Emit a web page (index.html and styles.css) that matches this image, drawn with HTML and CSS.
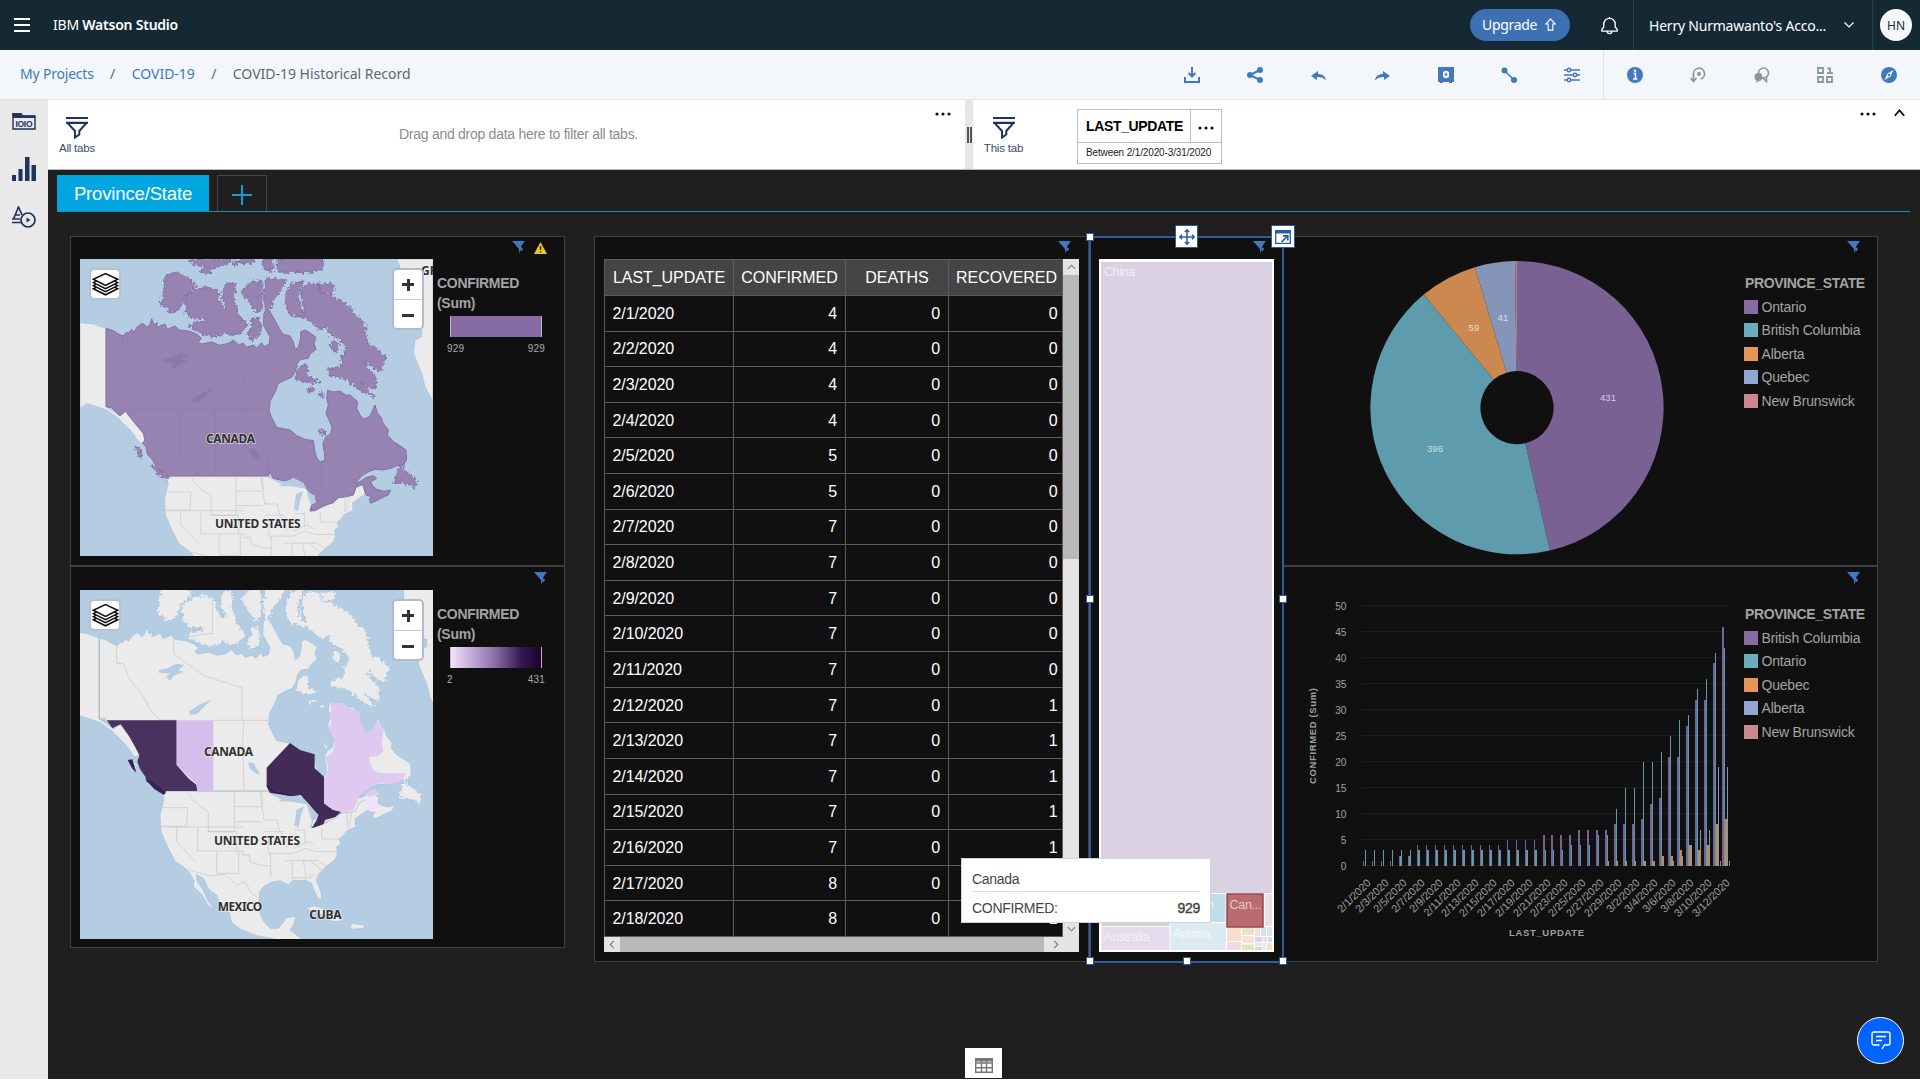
FILE: index.html
```html
<!DOCTYPE html>
<html lang="en">
<head>
<meta charset="utf-8">
<title>IBM Watson Studio</title>
<link rel="stylesheet" href="styles.css">
</head>
<body>
<svg class="defs" width="0" height="0" aria-hidden="true">
  <defs>
    <filter id="coast" x="-5%" y="-5%" width="110%" height="110%"><feTurbulence type="fractalNoise" baseFrequency=".12" numOctaves="2" seed="4"/><feDisplacementMap in="SourceGraphic" scale="22" xChannelSelector="R" yChannelSelector="G"/></filter>
    <symbol id="i-funnel" viewBox="0 0 13 13"><path d="M0 0h13L9.300 5v2.500L7 12.500V8L0 0z" fill="#4178be"/><path d="M9.500 6.500l1.500 1-1 2.500H8.500z" fill="#4178be"/></symbol>
    <symbol id="i-filter" viewBox="0 0 22 22"><path d="M0 1h22M0 5.800h22" stroke="#20335b" stroke-width="2"/><path d="M1.500 6h19L13.300 14v3.500L9 20.500V14z" fill="none" stroke="#20335b" stroke-width="2"/></symbol>
    <symbol id="i-dots" viewBox="0 0 16 4"><circle cx="2" cy="2" r="1.600"/><circle cx="8" cy="2" r="1.600"/><circle cx="14" cy="2" r="1.600"/></symbol>
    <symbol id="i-layers" viewBox="0 0 80 70"><g fill="#fff" stroke="#111" stroke-width="4.500"><path d="M4 49l36-18 36 18-36 18z"/><path d="M4 40l36-18 36 18-36 18z"/><path d="M4 31l36-18 36 18-36 18z"/><path d="M4 21L40 4l36 17-36 18z"/></g></symbol>
    <g id="north-america">
      <path d="M60 278l40 4 38 13v235l42 28 17-15 28 37 25 30 5 25-15 5-25-35-40-40-35-25-60-20-20 15z"/>
      <path d="M1010 87h109v428l-24-45-10-40-25-60 5-40 20-10v-20l-45-5-25-45 5-140z"/>
      <g transform="scale(.96376) translate(25.2 87.8)">
        <path d="M318 678H620L640 690 665 702 700 684 735 700 745 725 765 750 752 788 795 775 815 762 850 742 885 735 905 697 918 700 925 735 900 750 885 762 887 785 872 792 860 797 850 812 838 822 842 838 830 845 832 868 824 885 800 903 778 925 768 945 778 968 785 990 783 1006 772 997 760 970 755 955 735 945 715 948 700 945 685 960 660 947 635 952 610 965 600 980 597 1010 600 1045 612 1070 630 1090 655 1090 668 1075 678 1058 708 1053 700 1080 690 1095 720 1118 740 1135H700L640 1122 590 1112 540 1092 514 1072 508 1043 480 1018 470 990 448 975 430 940 408 928 412 950 430 975 442 1005 462 1032 445 1022 425 988 400 965 402 945 382 915 345 888 325 850 303 800 300 750 312 700 306 685z"/>
        <path d="M735 1030l28-8 35 12 30 16 20 18-30 2-35-22zM875 1075l35 5 5 10-45 3zM812 1092l14 1-4 4zM930 1090l12 1-4 4z"/>
      </g>
    </g>
    <g id="canada-shape">
      <path d="M138 295L160 302 175 312 190 318 198 308 206 308 215 298 222 306 232 290 248 280 262 292 270 282 275 266 282 284 292 278 290 292 315 282 322 298 345 288 358 300 385 303 410 312 425 325 414 336 425 342 455 336 480 346 505 340 520 330 535 344 550 340 560 352 580 345 590 354 605 338 612 350 628 342 630 320 618 300 610 285 612 250 622 232 640 262 655 290 668 312 690 318 700 335 705 358 715 352 722 325 722 305 735 300 752 310 768 322 762 340 768 358 750 372 745 385 722 388 712 400 706 425 695 442 675 450 655 460 648 480 640 495 630 515 628 545 635 562 650 592 690 600 712 618 735 628 760 632 764 662 770 682 780 697 795 690 793 665 788 640 798 620 812 612 816 590 805 565 798 550 805 525 800 505 803 480 820 486 840 483 858 496 870 495 893 515 890 535 900 555 912 568 930 558 938 540 945 525 952 548 965 565 968 578 985 600 982 615 1000 635 1022 648 1038 660 1040 690 1028 705 1008 708 995 714 970 720 945 718 925 725 905 738 885 760 900 755 920 742 940 737 950 745 932 755 938 768 950 778 972 784 992 780 985 795 962 805 950 812 932 820 928 808 935 800 918 795 910 770 905 765 888 772 880 795 862 800 835 803 820 818 790 828 765 842 750 843 755 825 768 812 762 795 748 785 735 772 728 765 700 748 670 752 640 745 630 725 625 738 330 738 320 745 305 725 290 712 278 690 262 672 258 650 248 640 255 630 250 610 225 580 205 555 197 543 180 558 155 533 138 530z"/>
      <g filter="url(#coast)">
      <path d="M315 137L345 127 385 140 410 170 390 185 372 205 368 220 355 240 330 250 318 232 300 220 312 190zM375 215L378 195 405 180 440 170 465 180 480 192 470 205 485 220 495 240 500 225 488 205 486 180 498 160 522 158 526 180 520 200 530 230 535 255 552 270 562 290 550 305 535 310 515 318 495 305 480 318 455 320 430 312 400 298 388 285 405 278 440 272 438 266 400 264 378 250 380 235z"/>
      <path d="M545 185L560 165 585 152 605 152 608 180 605 215 608 238 590 245 575 230 565 215zM618 143L680 150 668 170 655 195 640 210 635 235 615 240 612 200zM575 262l22 4 8 24-10 32-20 8-12-18 12-22zM385 92L400 87H520L505 98 470 112 440 130 420 125 440 110 400 103zM540 85H590L578 98 550 102 535 95zM608 85h32l-2 38-24-4-8-18zM650 85h138l2 30-40 13-95-2zM518 95l14-2 2 14-12 2z"/>
      <path d="M678 185L690 165 710 155 732 153 722 175 714 200 718 230 735 250 728 215 722 190 730 170 745 160 775 162 785 185 800 192 820 200 850 215 875 235 885 255 905 268 915 290 918 320 925 345 945 352 965 370 980 380 975 395 965 405 968 420 945 422 925 400 915 390 920 410 940 430 950 455 945 480 925 470 905 455 925 480 945 500 925 495 890 475 860 450 835 440 808 440 803 418 830 412 845 408 842 385 858 365 855 345 835 325 810 315 800 290 780 300 765 290 742 265 715 260 690 255 678 230zM770 163l48-2 6 26-40 4z"/>
      <path d="M715 410l25-10 5 40 35 15-40 5-35-12zM740 478l15-8 8 8-14 12zM780 485l8 4 2 14-8-4zM1035 697l-5 23 25 15 15 20-5 20-25-13-40-2 15-40zM275 705l53 33-8 10-30-16zM223 650l17 4 5 33-12-14zM782 600l10-2 4 14-12 4zM812 340l14-6 12 10-2 18-16 4-10-14z"/>
      </g>
    </g>
    <g id="lakes" fill="#b5cde3" stroke="none">
      <path d="M655 768l45-25 30 16 10 18-45-8zM708 792l22-10-10 30-6 32-12-6zM740 786l24 10 4 22-16 6z"/>
    </g>
    <g id="inland" stroke="none">
      <path d="M310 388l22-4 28-14 24 4-18 14 16 6-28 10-12 16-10-12 10-10-32-2zM398 508l30-20 34-14-22 22-20 20-20 2zM568 655l16 2 20 34-10-2-20-14z"/>
    </g>
    <g id="borders" fill="none" stroke="#c6c6cc" stroke-width="2">
      <path d="M303 728H382V752L378 784H303M303 786H550M350 786V830L408 890M382 680L395 700 415 720 445 740V800H523V680M413 786V858M413 858H548M470 858V922M445 800H530M523 725H605M523 770H605M530 800V858M548 858V870H568L570 890 600 900 632 903M600 680L612 765H650M612 800H672M625 820V865H700M632 865V935M650 765L660 800 672 820 680 850M536 858V925H470M605 680L608 720M385 915L450 932 495 928 530 960 555 950 575 985 597 1000M700 865L735 850 770 860M700 850L720 840 750 830 765 845M672 887H770M697 887V940M730 887L738 935M697 938H755M785 790V822H840M770 860H835M770 885L800 903M735 795V835M705 795H735M862 742V790M875 740L868 785M770 930H745M750 887L790 920"/>
    </g>
  </defs>
</svg>

<header class="topbar">
  <svg class="burger" viewBox="0 0 16 14"><path d="M0 1h16M0 7h16M0 13h16" stroke="#fff" stroke-width="2"/></svg>
  <div class="brand">IBM <b>Watson Studio</b></div>
  <div class="upgrade"><span>Upgrade</span><svg viewBox="0 0 12 14"><path d="M6 1L1 6.500h2.500V13h5V6.500H11z" fill="none" stroke="#fff" stroke-width="1.200"/></svg></div>
  <div class="bell"><svg viewBox="0 0 18 20"><path d="M9 1v2M1 16h16v-2l-2-2.500V8.500a6 6 0 0 0-12 0v3L1 14zM6.500 16a2.500 2.500 0 0 0 5 0" fill="none" stroke="#fff" stroke-width="1.400"/></svg></div>
  <div class="account"><span>Herry Nurmawanto's Acco...</span><svg viewBox="0 0 10 6"><path d="M.5.500L5 5 9.500.500" fill="none" stroke="#fff" stroke-width="1.200"/></svg></div>
  <div class="avatar-cell"><div class="avatar">HN</div></div>
</header>

<nav class="crumbs">
  <div class="trail"><a>My Projects</a><i>/</i><a>COVID-19</a><i>/</i><span>COVID-19 Historical Record</span></div>
  <div class="tools">
    <svg viewBox="0 0 16 16"><path d="M8 0v9M4.500 6L8 9.500 11.500 6M1 10v5h14v-5" fill="none" stroke="#4178be" stroke-width="2"/></svg>
    <svg viewBox="0 0 16 16"><path d="M13 3L3 8l10 5" fill="none" stroke="#4178be" stroke-width="2"/><g fill="#4178be"><circle cx="13" cy="3" r="3"/><circle cx="3" cy="8" r="3"/><circle cx="13" cy="13" r="3"/></g></svg>
    <svg viewBox="0 0 16 16"><path d="M7 4L0 9l6 4v-3c4 0 7 1 9 3.500C14.500 9 11 7 7 7z" fill="#4178be"/></svg>
    <svg viewBox="0 0 16 16"><path d="M9 4l7 5-6 4v-3c-4 0-7 1-9 3.500C1.500 9 5 7 9 7z" fill="#4178be"/></svg>
    <svg viewBox="0 0 16 16"><path d="M0 0h16v15h-2v1h-3v-1H5v1H2v-1H0zM8 3.500L5 5v5l3 1.500L11 10V5z" fill="#4178be" fill-rule="evenodd"/><circle cx="8" cy="7.500" r="1.300" fill="#4178be"/></svg>
    <svg viewBox="0 0 16 16"><path d="M3 3l10 10" stroke="#4178be" stroke-width="1.600"/><circle cx="3.500" cy="3.500" r="3" fill="#4178be"/><circle cx="13" cy="13" r="3" fill="#4178be"/></svg>
    <svg viewBox="0 0 16 16"><path d="M0 3h16M0 8h16M0 13h16" stroke="#4178be" stroke-width="1.500"/><g fill="#f3f7fc" stroke="#4178be" stroke-width="1.500"><circle cx="5" cy="3" r="1.700"/><circle cx="11" cy="8" r="1.700"/><circle cx="5" cy="13" r="1.700"/></g></svg>
  </div>
  <div class="tools side">
    <svg viewBox="0 0 16 16"><circle cx="8" cy="8" r="8" fill="#4178be"/><path d="M6.500 6.500h2V12M6 12h4.500" fill="none" stroke="#fff" stroke-width="1.600"/><circle cx="8" cy="3.800" r="1.200" fill="#fff"/></svg>
    <svg viewBox="0 0 16 16"><path d="M3.500 14V7a5.500 5.500 0 1 1 7 5M.5 11l3 3.500 3-3.500" fill="none" stroke="#8a969e" stroke-width="1.700"/><circle cx="9" cy="7" r="2" fill="#8a969e"/></svg>
    <svg viewBox="0 0 16 16"><circle cx="9.500" cy="6" r="5" fill="none" stroke="#8a969e" stroke-width="1.600"/><circle cx="4.500" cy="10" r="4" fill="#8a969e"/><path d="M2.500 12v4l3-2.500z" fill="#8a969e"/><path d="M9 11l3.500 3.500V10.500" fill="none" stroke="#8a969e" stroke-width="1.600"/></svg>
    <svg viewBox="0 0 16 16"><path d="M1 1h5v5H1zM1 10h5v5H1zM10 10h5v5h-5zM10.500 1.500H13V6M10 6.200h6" fill="none" stroke="#8a969e" stroke-width="1.800"/></svg>
    <svg viewBox="0 0 16 16"><circle cx="8" cy="8" r="8" fill="#4178be"/><path d="M12.500 3L9.500 9.500 3.500 13l3-6.500z" fill="#f3f7fc"/><circle cx="8" cy="8" r="1.200" fill="#4178be"/></svg>
  </div>
</nav>

<div class="work">
  <aside class="rail">
    <svg class="r1" viewBox="0 0 24 17"><path d="M1 1h8l1.500 2H23v13H1z" fill="none" stroke="#20335b" stroke-width="1.400"/><path d="M0 0h9l2 2.500h12V5H1z" fill="#20335b"/><text x="3.500" y="14" textLength="17">IOIO</text></svg>
    <svg class="r2" viewBox="0 0 24 24"><path d="M0 18h4v6H0zM6.500 12h4v12h-4zM13 0h4.500v24H13zM19.500 8H24v16h-4.500z" fill="#20335b"/></svg>
    <svg class="r3" viewBox="0 0 24 22"><g fill="none" stroke="#20335b" stroke-width="1.700"><path d="M1.500 13L6.500 1l3.500 8M3.500 9H8M0 13h8M0 16.500h9"/><circle cx="16" cy="14" r="7"/></g><path d="M14.500 11.500l4 2.500-4 2.500z" fill="#20335b"/></svg>
  </aside>
  <main class="main">
    <section class="filters">
      <div class="drop all">
        <div class="flabel"><svg><use href="#i-filter"/></svg><span>All tabs</span></div>
        <p>Drag and drop data here to filter all tabs.</p>
        <svg class="dots"><use href="#i-dots"/></svg>
      </div>
      <div class="splitter"><b></b></div>
      <div class="drop this">
        <div class="flabel"><svg><use href="#i-filter"/></svg><span>This tab</span></div>
        <div class="chip">
          <div class="chip-top"><strong>LAST_UPDATE</strong><em><svg class="dots"><use href="#i-dots"/></svg></em></div>
          <div class="chip-val">Between 2/1/2020-3/31/2020</div>
        </div>
        <svg class="dots"><use href="#i-dots"/></svg>
        <svg class="up" viewBox="0 0 10 7"><path d="M.7 6L5 1.200 9.300 6" fill="none" stroke="#111" stroke-width="1.700"/></svg>
      </div>
    </section>

    <section class="canvas">
      <div class="tabs">
        <div class="tab">Province/State</div>
        <div class="add"><svg viewBox="0 0 20 20"><path d="M10 0v20M0 10h20" stroke="#139bdc" stroke-width="2"/></svg></div>
      </div>

      <div class="board">
        <div class="col left">
          <article class="panel top">
            <div class="icons"><svg class="fn"><use href="#i-funnel"/></svg><svg class="warn" viewBox="0 0 13 12"><path d="M6.500 0L13 12H0z" fill="#f0c71c"/><path d="M6.500 4v4M6.500 9.300v1.300" stroke="#222" stroke-width="1.400"/></svg></div>
            <div class="row">
              <div class="map">
                <svg class="geo" viewBox="60 87 1059 891" preserveAspectRatio="none">
                  <use href="#north-america" fill="#ebebeb" stroke="#a9c0d8" stroke-width="2"/>
                  <use href="#canada-shape" fill="#9683b1" stroke="#856fa6" stroke-width="3"/>
                  <use href="#inland" fill="#8a79ac"/>
                  <path d="M188 318v22l30 60 40 90 30 46M365 303l60 70 130 68v95M200 538H628M358 538v130l57 70M466 538v200M555 540v198M685 605l-60 80v53M785 690v80l22 30M466 187v20M915 650l30 38h90" fill="none" stroke="#8b79a8" stroke-width="1.500"/>
                  <use href="#lakes"/>
                  <g transform="scale(.96376) translate(25.2 87.8)"><use href="#borders"/></g>
                  <g class="cty"><text x="438" y="638" textLength="147">CANADA</text><text x="465" y="893" textLength="257">UNITED STATES</text><text x="1083" y="134">GR</text></g>
                </svg>
                <div class="layers"><svg><use href="#i-layers"/></svg></div>
                <div class="zoomer"><span class="plus"></span><span class="minus"></span></div>
              </div>
              <div class="scale"><h4>CONFIRMED<br>(Sum)</h4><div class="ramp flat"></div><div class="ends"><span>929</span><span>929</span></div></div>
            </div>
          </article>
          <article class="panel bottom">
            <div class="icons"><svg class="fn"><use href="#i-funnel"/></svg></div>
            <div class="row">
              <div class="map">
                <svg class="geo" viewBox="60 75 1059 1047" preserveAspectRatio="none">
                  <g transform="translate(-25.2 -87.8) scale(1.0376)" fill="#ebebeb" stroke="#a4bfda" stroke-width="2">
                    <use href="#north-america"/><use href="#canada-shape"/><use href="#inland" fill="#b5cde3"/><use href="#lakes"/>
                  </g>
                  <g fill="none" stroke="#c6c6cc" stroke-width="2"><path d="M118 215V460h20" stroke="#aaa"/><path d="M170 240v55h20l15 40 45 60 25 45 28 26H350M341 218v48l90 66 115 36v98M458 100v105l-80 10M460 466H625M552 466l-4 60 4 150M460 678H620M118 460l20 6M350 466H300M460 678H412"/></g>
                  <use href="#borders"/>
                  <path d="M140 466H350V600L385 640 410 660 412 678H318L315 688 290 670 260 650 256 635 240 612 232 590 238 570 225 545 205 510 182 478 157 490z" fill="#493260"/>
                  <path d="M203 585l14-2 12 40-12-12zM256 642l24 10 36 30-4 8-30-18z" fill="#36205a"/>
                  <path d="M350 466H460V678H412L408 655 350 600z" fill="#d5beeb"/>
                  <path d="M620 608L690 534 720 555 764 568V610L792 635V715L820 735 848 737 825 757 795 765 790 778 755 790 770 765 775 750 762 735 740 710 720 688 685 692 630 683 620 665z" fill="#432b57"/>
                  <path d="M810 412L832 417 850 415 865 428 880 432 900 445 900 465 908 485 920 503 940 490 957 465 970 500 965 530 970 560 950 575 928 575 932 600 945 620 960 625H1040L1020 650 990 657 960 655 920 670 900 690 880 735 850 743 820 735 792 715V635L804 618 802 595 793 578 820 560 824 535 820 512 806 490 815 470 808 450 815 430zM912 686l30-14 16 10-30 16z" fill="#dfc9f1"/>
                  <path d="M912 703L940 690 955 698 952 712 962 722 940 742 922 735z" fill="#efe2fb"/>
                  <path d="M622 660l14 20 59 12 30-4" fill="none" stroke="#2a1246" stroke-width="3"/>
                  <g class="cty"><text x="432" y="573" textLength="147">CANADA</text><text x="462" y="839" textLength="258">UNITED STATES</text><text x="473" y="1038" textLength="134">MEXICO</text><text x="748" y="1062" textLength="97">CUBA</text></g>
                </svg>
                <div class="layers"><svg><use href="#i-layers"/></svg></div>
                <div class="zoomer"><span class="plus"></span><span class="minus"></span></div>
              </div>
              <div class="scale"><h4>CONFIRMED<br>(Sum)</h4><div class="ramp grad"></div><div class="ends"><span>2</span><span>431</span></div></div>
            </div>
          </article>
        </div>

        <article class="panel grid-panel">
          <div class="icons"><svg class="fn"><use href="#i-funnel"/></svg></div>
          <div class="grid-wrap">
            <table><thead><tr><th>LAST_UPDATE</th><th>CONFIRMED</th><th>DEATHS</th><th>RECOVERED</th></tr></thead><tbody id="rows"></tbody></table>
            <div class="vbar"><i><svg viewBox="0 0 10 6"><path d="M1 5l4-4 4 4"/></svg></i><b></b><i class="end"><svg viewBox="0 0 10 6"><path d="M1 1l4 4 4-4"/></svg></i></div>
            <div class="hbar"><i><svg viewBox="0 0 6 10"><path d="M5 1L1 5l4 4"/></svg></i><b></b><i class="end"><svg viewBox="0 0 6 10"><path d="M1 1l4 4-4 4"/></svg></i></div>
          </div>
        </article>

        <article class="panel tree-panel">
          <div class="icons"><svg class="fn"><use href="#i-funnel"/></svg></div>
          <svg class="tree" viewBox="1099 259 175 693">
            <rect x="1099" y="259" width="175" height="693" fill="#fff"/>
            <rect x="1101" y="262" width="171" height="631" fill="#dad2e3"/>
            <rect x="1101.500" y="894" width="68" height="32" fill="#d5cfe1"/>
            <rect x="1170.500" y="894" width="55" height="28" fill="#c3dcea"/>
            <rect x="1101.500" y="927" width="68" height="23" fill="#e4dcec"/>
            <rect x="1170.500" y="923" width="55.500" height="27" fill="#dcebf1"/>
            <rect x="1265" y="894" width="7" height="32" fill="#f0dde0"/>
            <rect x="1227" y="928" width="14" height="13" fill="#f6dfcd"/><rect x="1227" y="942" width="14" height="8" fill="#efdcdf"/>
            <rect x="1242" y="927" width="12" height="8" fill="#dfe6cb"/><rect x="1242" y="936" width="12" height="7" fill="#fae2d8"/><rect x="1242" y="944.500" width="12" height="5.500" fill="#dfe6cb"/>
            <rect x="1255" y="927" width="5" height="9" fill="#f8e0d8"/><rect x="1261" y="927" width="5" height="9" fill="#cfe6ee"/><rect x="1267" y="927" width="5" height="9" fill="#d9e2f0"/>
            <rect x="1255" y="937" width="7" height="5" fill="#dcd2e6"/><rect x="1263" y="937" width="4" height="5" fill="#f1d9dc"/><rect x="1268" y="937" width="4" height="5" fill="#c9dfe4"/>
            <rect x="1255" y="943" width="7" height="3" fill="#f6dfcd"/><rect x="1255" y="947" width="7" height="3" fill="#dcd2e6"/><rect x="1263" y="943" width="3" height="7" fill="#dfe9f2"/><rect x="1267" y="943" width="5" height="7" fill="#f6dfc3"/>
            <rect x="1227" y="894" width="36" height="33" fill="#bb6a6f" stroke="#93484f" stroke-width="1.500"/>
            <g class="tl"><text x="1104" y="276" textLength="31">China</text><text x="1104" y="941" textLength="46">Australia</text><text x="1173" y="938" textLength="37">Austria</text><text x="1207" y="909">n</text><text x="1229.500" y="909" textLength="32">Can...</text></g>
          </svg>
          <div class="frame"></div>
          <s class="h tl1"></s><s class="h ml"></s><s class="h mr"></s><s class="h bl"></s><s class="h bm"></s><s class="h br"></s>
          <div class="grab move"><svg viewBox="0 0 16 16"><path d="M8 1v14M1 8h14M5.800 3L8 .800 10.200 3M5.800 13L8 15.200 10.200 13M3 5.800L.800 8 3 10.200M13 5.800L15.200 8 13 10.200" fill="none" stroke="#2d5b9e" stroke-width="1.500"/></svg></div>
          <div class="grab open"><svg viewBox="0 0 16 14"><path d="M.7.700h14.600v12.600H.7z" fill="none" stroke="#2d5b9e" stroke-width="1.300"/><path d="M0 0h16v3.500H0z" fill="#2d5b9e"/><path d="M6.500 12l6-6M8 5.800h4.800v4.700" fill="none" stroke="#2d5b9e" stroke-width="1.700"/></svg></div>
          <div class="tip"><div class="tip-name">Canada</div><div class="tip-row"><span>CONFIRMED:</span><b>929</b></div></div>
        </article>

        <div class="col right">
          <article class="panel top">
            <div class="icons"><svg class="fn"><use href="#i-funnel"/></svg></div>
            <div class="row">
              <svg class="pie" viewBox="1284 259 460 305"><g id="pie"></g><g class="pl"><text x="1608" y="400.500">431</text><text x="1435" y="451.500">396</text><text x="1474" y="330.500">59</text><text x="1503" y="320.500">41</text></g></svg>
              <div class="legend"><h4>PROVINCE_STATE</h4><ul><li class="c1">Ontario</li><li class="c2">British Columbia</li><li class="c3">Alberta</li><li class="c4">Quebec</li><li class="c5">New Brunswick</li></ul></div>
            </div>
          </article>
          <article class="panel bottom">
            <div class="icons"><svg class="fn"><use href="#i-funnel"/></svg></div>
            <div class="row">
              <svg class="bars" viewBox="1284 589 460 370"><g id="bars"></g>
                <text class="ax" transform="translate(1316 784) rotate(-90)" textLength="96">CONFIRMED (Sum)</text>
                <text class="ax" x="1509" y="936" textLength="75">LAST_UPDATE</text>
              </svg>
              <div class="legend"><h4>PROVINCE_STATE</h4><ul><li class="c1">British Columbia</li><li class="c2">Ontario</li><li class="c3">Quebec</li><li class="c4">Alberta</li><li class="c5">New Brunswick</li></ul></div>
            </div>
          </article>
        </div>
      </div>

      <div class="sheet"><svg viewBox="0 0 18 15"><path d="M.7.700h16.600v13.600H.7zM0 5h18M0 9.700h18M6.500 3v12M11.500 3v12" fill="none" stroke="#767676" stroke-width="1.400"/><path d="M0 0h18v3.500H0z" fill="#767676"/></svg></div>
      <div class="chat"><svg viewBox="0 0 20 19"><path d="M8.500 14H3a2 2 0 0 1-2-2V3a2 2 0 0 1 2-2h14a2 2 0 0 1 2 2v9a2 2 0 0 1-2 2h-3.500L11 18M5 5.500h10M5 9.500h6" fill="none" stroke="#fff" stroke-width="1.400"/></svg></div>
    </section>
  </main>
</div>
<script src="script.js"></script>
</body>
</html>
```
FILE: styles.css
```css
* { box-sizing: border-box; }
body { margin: 0; width: 1920px; height: 1080px; overflow: hidden; background: #fff; display: flex; flex-direction: column; font-family: "Liberation Sans", Arial, sans-serif; }
svg { display: block; flex: none; }
.defs { position: absolute; }

.topbar { height: 50px; flex: none; background: #152934; color: #fff; display: flex; align-items: center; padding-left: 14px; font-family: "Noto Sans", "Open Sans", sans-serif; }
.burger { width: 16px; height: 14px; }
.brand { margin: -2px 0 0 23px; flex: 1; font-size: 14px; letter-spacing: -.23px; }
.brand b { font-weight: 600; }
.upgrade { width: 100px; height: 32px; border-radius: 16px; background: #3d70b2; display: flex; align-items: center; padding: 0 0 2px 12px; font-size: 14px; }
.upgrade span { width: 54px; letter-spacing: -.3px; }
.upgrade svg { width: 13px; height: 13px; margin-left: 8px; }
.bell { width: 63px; padding-left: 30px; }
.bell svg { width: 19px; height: 19px; }
.account { width: 240px; height: 50px; border-left: 1px solid #2c3e4a; border-right: 1px solid #2c3e4a; display: flex; align-items: center; padding-left: 15px; font-size: 14px; letter-spacing: -.22px; }
.account span { width: 178px; white-space: nowrap; }
.account svg { width: 10px; height: 6px; margin-left: 17px; }
.avatar-cell { width: 47px; padding-left: 7px; }
.avatar { width: 32px; height: 32px; border-radius: 50%; background: #f5f7fb; color: #152934; font-size: 12px; display: flex; align-items: center; justify-content: center; }

.crumbs { height: 50px; flex: none; background: #f3f7fc; border-bottom: 1px solid #dfe4ea; display: flex; align-items: center; font-family: "Noto Sans", sans-serif; font-size: 14px; }
.trail { width: 1150px; padding: 0 0 3px 20px; display: flex; color: #5a6872; letter-spacing: -.02px; white-space: nowrap; }
.trail a { color: #4178be; }
.trail a:first-child { letter-spacing: -.2px; }
.trail i { font-style: normal; width: 38px; text-align: center; }
.tools { display: flex; height: 49px; align-items: center; gap: 47.400px; padding: 0 0 0 34px; width: 453px; }
.tools svg { width: 16px; height: 16px; }
.tools.side { border-left: 1px solid #dfe4ea; padding-left: 23px; width: auto; }

.work { display: flex; height: 979px; }
.rail { width: 48px; background: #e9e9e9; padding: 13px 12px; display: flex; flex-direction: column; }
.rail svg { width: 24px; }
.rail text { font: 700 8.500px "Liberation Sans", sans-serif; fill: #20335b; }
.r1 { height: 17px; } .r2 { height: 24px; margin-top: 27px; } .r3 { height: 22px; margin-top: 25px; }
.main { flex: 1; display: flex; flex-direction: column; }

.filters { height: 70px; background: #fff; border-bottom: 1px solid #b5babd; display: flex; flex: none; }
.drop { display: flex; align-items: flex-start; }
.drop.all { width: 917px; }
.drop.this { flex: 1; }
.flabel { width: 58px; padding-top: 17px; display: flex; flex-direction: column; align-items: center; font-size: 11.500px; color: #3a4a66; letter-spacing: -.2px; white-space: nowrap; }
.this .flabel { width: 61px; }
.flabel svg { width: 22px; height: 22px; margin-bottom: 3px; }
.drop p { margin: 26px 0 0 293px; width: 530px; font-size: 14px; letter-spacing: -.27px; color: #8c8c8c; }
.dots { width: 16px; height: 4px; fill: #111; }
.drop > .dots { margin-top: 12px; }
.all > .dots { margin-left: 6px; }
.splitter { width: 8px; background: #e6e6e6; display: flex; align-items: center; justify-content: center; }
.splitter b { width: 5px; height: 16px; border: solid #555; border-width: 0 2px; }
.chip { margin: 9px 638px 0 43px; width: 145px; border: 1px solid #bcbcbc; }
.chip-top { display: flex; height: 33px; border-bottom: 1px solid #bcbcbc; align-items: center; }
.chip-top strong { width: 114px; padding-left: 8px; font-size: 14px; letter-spacing: -.35px; color: #000; }
.chip-top em { border-left: 1px solid #bcbcbc; height: 32px; padding: 16px 7px; }
.chip-val { height: 20px; line-height: 19px; padding-left: 8px; font-size: 10px; letter-spacing: -.13px; color: #222; white-space: nowrap; }
.up { width: 11px; height: 8px; margin: 9px 0 0 18px; }

.canvas { flex: 1; background: #1f1f1f; position: relative; }
.tabs { margin: 5px 10px 0 9px; height: 37px; border-bottom: 1px solid #1c8dbd; display: flex; gap: 8px; }
.tab { width: 152px; background: #00a6df; color: #fff; font-size: 18.500px; letter-spacing: -.15px; text-align: center; line-height: 37px; }
.add { width: 50px; border: 1px solid #444; border-bottom: 0; display: flex; align-items: center; justify-content: center; padding-top: 2px; }
.add svg { width: 20px; height: 20px; }

.board { margin: 24px 0 0 22px; height: 726px; display: grid; grid-template-columns: 495px 29px 495px 195px 594px; }
.left { grid-column: 1; } .grid-panel { grid-column: 3; } .tree-panel { grid-column: 4; } .right { grid-column: 5; }
.panel { background: #101010; border: 1px solid #404040; position: relative; }
.panel.tree-panel { z-index: 2; }
.col .top { height: 330px; }
.col .bottom { height: 396px; }
.left .bottom { height: 382px; }
.right .panel { border-left: 0; }
.icons { height: 22px; padding: 4px 17px 0 0; display: flex; justify-content: flex-end; gap: 9px; }
.fn { width: 13px; height: 13px; }
.warn { width: 13px; height: 12px; margin-top: 1px; }
.bottom .icons { height: 23px; padding-top: 5px; }
.row { display: flex; }

.map { margin-left: 9px; width: 353px; height: 297px; position: relative; background: #b5cde3; overflow: hidden; }
.bottom .map { height: 349px; }
.geo { width: 100%; height: 100%; }
.cty { font: 700 36px "Noto Sans", "Open Sans", sans-serif; fill: #303030; stroke: #f4f4f4; stroke-width: 5px; stroke-opacity: .6; paint-order: stroke; }
.layers { position: absolute; left: 9px; top: 9px; width: 32px; height: 32px; background: #fff; border: 2px solid #b9c1cc; border-radius: 5px; background-clip: padding-box; }
.layers svg { width: 27px; height: 24px; margin: 2px .5px; }
.zoomer { position: absolute; left: 312px; top: 9px; width: 32px; height: 62px; border: 2px solid #b0bccb; border-radius: 5px; background: #fff; overflow: hidden; }
.zoomer span { display: flex; height: 30px; align-items: center; justify-content: center; border-bottom: 1px solid #ccc; position: relative; }
.zoomer span::before { content: ""; width: 12px; height: 3px; background: #333; }
.zoomer .plus::after { content: ""; position: absolute; width: 3px; height: 12px; background: #333; }
.zoomer .minus { border: 0; }
h4 { margin: 0; font-size: 14px; font-weight: 700; letter-spacing: -.3px; color: #a3a3a3; line-height: 20px; }
.scale { padding: 14px 0 0 4px; }
.ramp { margin: 3px 0 0 13px; width: 92px; height: 21px; border: solid #bdb5c8; border-width: 0 1px; }
.flat { background: #876ba4; }
.grad { background: linear-gradient(90deg, #f1e3fc, #b39bca 30%, #876ba4 50%, #33194f 78%, #1c002f); }
.ends { width: 98px; margin: 6px 0 0 10px; display: flex; justify-content: space-between; font-size: 10px; letter-spacing: .2px; color: #a8a8a8; }

.grid-wrap { margin: 0 0 0 9px; width: 475px; display: grid; grid-template: 678px 15px / 459px 16px; }
table { border-collapse: collapse; table-layout: fixed; width: 459px; height: 678px; color: #fff; font-size: 16px; letter-spacing: -.05px; background: #101010; }
th { background: #454545; font-weight: 400; height: 36px; padding: 0; }
th, td { border: 1px solid #5c5c5c; white-space: nowrap; }
tr > *:nth-child(1) { width: 129px; } tr > *:nth-child(2) { width: 112px; } tr > *:nth-child(3) { width: 103px; }
th:last-child { padding-left: 2px; }
td { text-align: right; padding: 1px 8px 0; }
td:first-child { text-align: left; letter-spacing: -.08px; padding-left: 7.5px; }
td:last-child { padding-right: 4.5px; }
.vbar { background: #e4e4e4; display: flex; flex-direction: column; }
.vbar b { background: #b8b8b8; height: 284px; }
.vbar i { height: 16px; }
.hbar { background: #e4e4e4; grid-column: 1 / 3; display: flex; }
.hbar b { background: #b8b8b8; width: 424px; }
.hbar i { width: 16px; }
.vbar i, .hbar i { display: flex; align-items: center; justify-content: center; }
.hbar .end { width: 24px; }
.vbar .end { margin-top: auto; }
.vbar svg { width: 9px; height: 6px; } .hbar svg { width: 6px; height: 9px; }
.vbar path, .hbar path { fill: none; stroke: #777; stroke-width: 1.2; }

.tree { width: 175px; height: 693px; margin-left: 9px; }
.tl { font: 12.5px "Liberation Sans", sans-serif; fill: #fff; fill-opacity: .65; }
.frame { position: absolute; left: -1px; top: -1px; width: 195px; height: 727px; border: 2px solid #2d5b9e; }
.h { position: absolute; width: 8px; height: 8px; background: #fff; border: 1px solid #2d5b9e; }
.tl1 { left: -4px; top: -4px; } .ml { left: -4px; top: 358px; } .mr { left: 189px; top: 358px; }
.bl { left: -4px; top: 720px; } .bm { left: 93px; top: 720px; } .br { left: 189px; top: 720px; }
.grab { position: absolute; top: -12px; width: 23px; height: 23px; border: 1px solid #2d5b9e; background: #fff; display: flex; align-items: center; justify-content: center; }
.grab svg { width: 16px; height: 16px; }
.move { left: 85px; } .open { left: 181px; width: 24px; }
.tip { position: absolute; left: -129px; top: 621px; width: 250px; height: 65px; background: #fff; border: 1px solid #d4d4d4; padding: 10px 10px 0; font-size: 14px; letter-spacing: -.3px; color: #444; }
.tip-name { height: 23px; line-height: 21px; border-bottom: 1px solid #ddd; }
.tip-row { display: flex; justify-content: space-between; line-height: 33px; }
.tip b { font-weight: 400; -webkit-text-stroke: .4px #444; }

.pie { width: 460px; height: 305px; }
.bars { width: 460px; height: 370px; margin-top: -1px; }
.pl { font-size: 9.5px; fill: #fff; fill-opacity: .7; text-anchor: middle; letter-spacing: .1px; }
.yl, .xl { font-size: 10.2px; fill: #a0a0a0; text-anchor: end; }
.xl { font-size: 10.8px; }
.ax { font-size: 9.5px; font-weight: 700; fill: #a0a0a0; }
.legend { padding: 14px 0 0; white-space: nowrap; }
.legend h4 { letter-spacing: -.35px; padding-left: 1px; }
.legend ul { list-style: none; margin: 2px 0 0; padding: 0; }
.legend li { height: 23.5px; display: flex; align-items: center; gap: 3.5px; font-size: 14px; letter-spacing: -.2px; color: #a3a3a3; }
.legend li::before { content: ""; width: 14px; height: 14px; background: var(--c); }
.c1 { --c: #876ba4; } .c2 { --c: #69aebf; } .c3 { --c: #e39657; } .c4 { --c: #92a6d2; } .c5 { --c: #cc898d; }

.sheet { position: absolute; left: 917px; bottom: 1px; width: 37px; height: 30px; background: #fff; display: flex; align-items: center; justify-content: center; padding-top: 5px; }
.sheet svg { width: 18px; height: 15px; }
.chat { position: absolute; left: 1809px; top: 847px; width: 47px; height: 47px; border-radius: 50%; border: 1px solid #fff; background: #0062ff; display: flex; align-items: center; justify-content: center; }
.chat svg { width: 20px; height: 19px; }
```
FILE: script.js
```js
// Table rows
const confirmed = [4, 4, 4, 4, 5, 5, 7, 7, 7, 7, 7, 7, 7, 7, 7, 7, 8, 8];
document.getElementById('rows').innerHTML = confirmed.map((n, i) =>
  `<tr><td>2/${i + 1}/2020</td><td>${n}</td><td>0</td><td>${i > 10 ? 1 : 0}</td></tr>`).join('');

// Donut chart
const slices = [[431, '#796193'], [396, '#5e9cad'], [59, '#cb894f'], [41, '#8595b9'], [2, '#b47e80']];
const cx = 1517, cy = 407.7, R = 146.6, r = 36.6;
let a = 0;
document.getElementById('pie').innerHTML = slices.map(([v, c]) => {
  const b = a + v / 929 * Math.PI * 2, big = b - a > Math.PI ? 1 : 0;
  const p = (q, t) => `${cx + q * Math.sin(t)} ${cy - q * Math.cos(t)}`;
  const d = `M${p(R, a)}A${R} ${R} 0 ${big} 1 ${p(R, b)}L${p(r, b)}A${r} ${r} 0 ${big} 0 ${p(r, a)}Z`;
  a = b;
  return `<path d="${d}" fill="${c}"/>`;
}).join('');

// Clustered columns
const rep = (v, n) => Array(n).fill(v);
const bc = [...rep(1, 4), ...rep(2, 2), ...rep(4, 10), ...rep(5, 4), ...rep(6, 4), ...rep(7, 4), 8, 8, 8, 9, 12, 13, 21, 21, 27, 32, 32, 39, 46];
const on = [...rep(3, 23), 4, 4, 4, 6, 6, 11, 15, 15, 20, 20, 22, 25, 28, 29, 34, 36, 41, 42];
const qc = { 27: 1, 28: 1, 29: 1, 30: 1, 31: 1, 32: 1, 33: 2, 34: 2, 35: 3, 36: 4, 37: 3, 38: 4, 39: 8, 40: 9 };
const ab = { 34: 1, 35: 2, 36: 4, 37: 7, 38: 7, 39: 19, 40: 19 };
const base = 866, unit = 5.2;
const bar = (x, w, h, c) => `<rect x="${x}" y="${base - h * unit}" width="${w}" height="${h * unit}" fill="${c}" shape-rendering="crispEdges"/>`;
let out = '';
for (let v = 0; v <= 50; v += 5) {
  const y = base - v * unit;
  out += `<path d="M1362 ${Math.round(y) - .5}H1730" stroke="#1c1c1c"/><text class="yl" x="1346.500" y="${y + 3.5}">${v}</text>`;
}
for (let i = 0; i < 41; i++) {
  const x = Math.round(1363 + i * 8.975);
  const wide = i > 19;
  out += bar(x, wide ? 2 : 1, bc[i], '#796193');
  if (i > 3) out += bar(x + 1, 1, Math.min(bc[i], on[i]), wide ? '#66699a' : '#6b98b0');
  out += bar(x + 2, 1, on[i], '#5e9cad');
  if (ab[i]) out += bar(x + 5, 1, ab[i], '#8595b9');
  if (qc[i]) out += bar(x + 3, i > 30 ? 2 : 1, qc[i], '#cb894f');
  if (qc[i] && i > 35) out += bar(x + 4, 2, Math.min(qc[i], ab[i]), '#a5927e');
  if (i > 38) out += bar(x + 7, 1, 1, '#b47e80');
  if (i % 2 === 0) {
    const d = i < 29 ? `2/${i + 1}/2020` : `3/${i - 28}/2020`;
    out += `<text class="xl" transform="translate(${x + 8.5} 883.500) rotate(-45)">${d}</text>`;
  }
}
document.getElementById('bars').innerHTML = out;
```
